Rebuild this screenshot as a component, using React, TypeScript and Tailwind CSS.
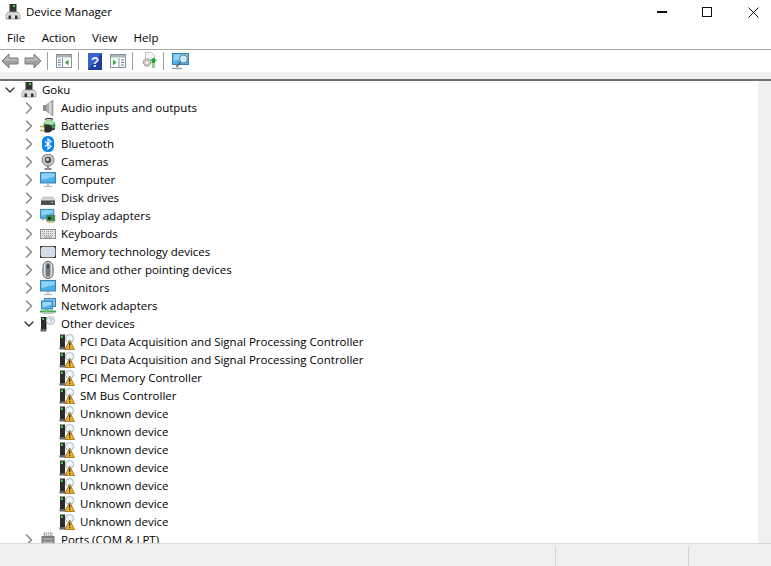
import React from 'react';
import { ChevronDown, ChevronRight } from 'lucide-react';

const PcIcon = () => (
  <svg width="18" height="18" viewBox="0 0 18 18">
    <rect x="5.500" y="1" width="7" height="8" fill="#333" />
    <rect x="9" y="2" width="2" height="2" fill="#3fd34a" />
    <path d="M4 9h10l2 2.500V16H2v-4.500z" fill="#dcdcdc" stroke="#9a9a9a" strokeWidth="0.8" />
    <rect x="4.500" y="12.500" width="2.500" height="3.500" fill="#333" />
    <rect x="11" y="12.500" width="2.500" height="3.500" fill="#333" />
  </svg>
);

const AudioIcon = () => (
  <svg width="16" height="16" viewBox="0 0 16 16">
    <rect x="3" y="5" width="4" height="6" fill="#8f8f8f" />
    <path d="M6 5l7-5v16l-7-5z" fill="#b0b0b0" stroke="#8c8c8c" strokeWidth="0.6" />
    <rect x="9" y="2.500" width="2.500" height="11" fill="#d6d6d6" />
  </svg>
);

const BatteryIcon = () => (
  <svg width="16" height="16" viewBox="0 0 16 16">
    <path d="M5 1.500c2-1.500 6-1.500 8 0" fill="none" stroke="#333" strokeWidth="1.200" />
    <ellipse cx="9.500" cy="7.500" rx="6" ry="6" fill="#3f9c4a" />
    <ellipse cx="9.500" cy="4.500" rx="5" ry="2.500" fill="#a6dfa8" />
    <path d="M0 8.500h5M0 12.500h5" stroke="#c9a13a" strokeWidth="1.400" />
    <path d="M4.500 6.500h3.500a4 4 0 0 1 0 8H4.500z" fill="#2d2d2d" />
    <path d="M11 11h4" stroke="#333" strokeWidth="1.500" />
  </svg>
);

const BluetoothIcon = () => (
  <svg width="16" height="16" viewBox="0 0 16 16">
    <rect x="2" y="0" width="12" height="16" rx="5.500" fill="#0a84f0" />
    <path d="M5 5.500l6 5-3 2.500V3l3 2.500-6 5" fill="none" stroke="#fff" strokeWidth="1.200" />
  </svg>
);

const CameraIcon = () => (
  <svg width="16" height="16" viewBox="0 0 16 16">
    <circle cx="8" cy="6" r="6" fill="#c9c9c9" stroke="#777" />
    <circle cx="8" cy="6" r="3.200" fill="#555" />
    <circle cx="7.500" cy="5.500" r="1.400" fill="#b9d4ea" />
    <path d="M8 12v2M4.500 15h7" stroke="#666" strokeWidth="1.500" />
  </svg>
);

const MonitorIcon = () => (
  <svg width="16" height="16" viewBox="0 0 16 16">
    <rect x="0.500" y="0.500" width="15" height="10.500" fill="#4db2ec" stroke="#3f7fae" />
    <path d="M1.500 1.500h13v3l-13 3.500z" fill="#8fd4f6" />
    <path d="M8 11v2.500" stroke="#a9b4bd" strokeWidth="2" />
    <path d="M4 14.500h8" stroke="#b4bcc3" strokeWidth="1.200" />
  </svg>
);

const DiskIcon = () => (
  <svg width="16" height="16" viewBox="0 0 16 16">
    <path d="M3 7h10l2 3.500H1z" fill="#d5d5d5" stroke="#aaa" strokeWidth="0.500" />
    <rect x="1" y="10.500" width="14" height="4.500" fill="#4e4e4e" />
    <rect x="11" y="12" width="2" height="1" fill="#5fe05f" />
  </svg>
);

const DisplayIcon = () => (
  <svg width="18" height="16" viewBox="0 0 18 16">
    <rect x="0.500" y="0.500" width="15" height="10" fill="#4db2ec" stroke="#3f7fae" />
    <path d="M1.500 1.500h13v3l-13 3z" fill="#8fd4f6" />
    <path d="M2 12h3" stroke="#9aa4ac" strokeWidth="1.500" />
    <rect x="7" y="7" width="10" height="7" fill="#3d8a4a" />
    <rect x="9" y="9" width="3" height="3" fill="#222" />
    <path d="M8 15h8" stroke="#c9a13a" />
  </svg>
);

const KeyboardIcon = () => (
  <svg width="16" height="16" viewBox="0 0 16 16">
    <rect x="0.500" y="3.500" width="15" height="9" fill="#e4e4e4" stroke="#8d8d8d" />
    <path d="M2 5.500h12M2 7.500h12M2 9.500h12" stroke="#9a9a9a" strokeDasharray="1 1" />
    <path d="M4 11h8" stroke="#9a9a9a" />
  </svg>
);

const MemoryIcon = () => (
  <svg width="16" height="16" viewBox="0 0 16 16">
    <rect x="0.500" y="2.500" width="15" height="11" rx="1.500" fill="#d4dde6" stroke="#6a6a6a" />
    <path d="M0.500 4.500v-2h2M13.500 2.500h2v2M15.500 11.500v2h-2M2.500 13.500h-2v-2" fill="none" stroke="#222" />
  </svg>
);

const MouseIcon = () => (
  <svg width="14" height="18" viewBox="0 0 14 18">
    <rect x="2" y="0.500" width="10" height="17" rx="5" fill="#e2e2e2" stroke="#555" />
    <rect x="4.500" y="2" width="5" height="14" rx="2.500" fill="#6f7a88" />
    <rect x="6.200" y="3.500" width="1.600" height="4" fill="#30363d" />
  </svg>
);

const NetworkIcon = () => (
  <svg width="16" height="16" viewBox="0 0 16 16">
    <rect x="4.500" y="0.500" width="11" height="8" fill="#7fcaf2" stroke="#3f7fae" />
    <rect x="1.500" y="3" width="11" height="8" fill="#4db2ec" stroke="#3f7fae" />
    <path d="M2.500 4h9v2.500l-9 3z" fill="#9bd9f7" />
    <path d="M0 13.500h16" stroke="#3fa34d" strokeWidth="2" />
    <path d="M7 11v3" stroke="#6fbf73" strokeWidth="3" />
    <path d="M2 15.500h12" stroke="#bfc5ca" />
  </svg>
);

const OtherIcon = () => (
  <svg width="16" height="16" viewBox="0 0 16 16">
    <rect x="1" y="1" width="5.500" height="12" fill="#2b2b2b" />
    <rect x="2" y="2" width="2" height="2" fill="#3fd34a" />
    <path d="M0.500 13h6v2.500h-6z" fill="#666" />
    <circle cx="10.500" cy="4.500" r="4" fill="#f4f8fb" stroke="#9cb3c6" />
    <text x="10.500" y="7" textAnchor="middle" fontSize="6.500" fill="#3f7fae" fontFamily="Liberation Sans, sans-serif">?</text>
  </svg>
);

const WarningIcon = () => (
  <svg width="18" height="18" viewBox="0 0 18 18">
    <rect x="2" y="1.500" width="5" height="12.500" fill="#2b2b2b" />
    <rect x="2.800" y="2.500" width="2" height="2.500" fill="#3fd34a" />
    <path d="M1.500 14h6v2.500h-6z" fill="#666" />
    <circle cx="11.500" cy="5.500" r="4" fill="#f4f8fb" stroke="#9cb3c6" />
    <path d="M11.700 7L16.500 16.500H7z" fill="#f5b324" stroke="#7b5a10" strokeWidth="0.700" />
    <path d="M11.700 9.500v3.800M11.700 14v1.200" stroke="#222" strokeWidth="1.200" />
  </svg>
);

const PortIcon = () => (
  <svg width="16" height="16" viewBox="0 0 16 16">
    <path d="M4 1h8v3H4z" fill="#e4e4e4" stroke="#666" strokeDasharray="1 1" />
    <rect x="1.500" y="4" width="13" height="11" fill="#7b7b7b" />
    <path d="M3 7h10M3 10h10M3 13h10" stroke="#d0d0d0" />
  </svg>
);

const BackIcon = ({ flip }: { flip?: boolean }) => (
  <svg width="18" height="16" viewBox="0 0 18 16" className={flip ? '-scale-x-100' : ''}>
    <path d="M1 8l7-7v4h9v6H8v4z" fill="#a0a0a0" stroke="#7c7c7c" />
    <path d="M3 7.500L7.500 3v3h9v1.500z" fill="#bdbdbd" />
  </svg>
);

const PaneIcon = ({ right }: { right?: boolean }) => (
  <svg width="16" height="14" viewBox="0 0 16 14">
    <rect x="0.500" y="0.500" width="15" height="13" fill="#fff" stroke="#8a949c" />
    <rect x="1" y="1" width="14" height="2.500" fill="#a9b4bd" />
    {right ? (
      <>
        <path d="M3 5.500l3.500 3-3.500 3z" fill="#2fae3c" />
        <path d="M9 4v9" stroke="#8a949c" />
        <path d="M11 6h3M11 8.500h3M11 11h3" stroke="#4d7ea8" />
      </>
    ) : (
      <>
        <path d="M2 6h3M2 8.500h3M2 11h3" stroke="#4d7ea8" />
        <path d="M6.500 4v9" stroke="#8a949c" />
        <path d="M12.500 5.500L9 8.500l3.500 3z" fill="#2fae3c" />
      </>
    )}
  </svg>
);

const HelpIcon = () => (
  <svg width="14" height="17" viewBox="0 0 14 17">
    <rect width="14" height="17" fill="#1f3f9e" />
    <path d="M0 0h14L0 17z" fill="#3a62c8" />
    <text x="7" y="13.500" textAnchor="middle" fontSize="14" fontWeight="700" fill="#e8ecf8" fontFamily="Liberation Sans, sans-serif">?</text>
  </svg>
);

const UpdateIcon = () => (
  <svg width="18" height="18" viewBox="0 0 18 18">
    <path d="M4.500 0.500h6l3 3v7h-9z" fill="#f6f6f6" stroke="#c4c4c4" />
    <circle cx="6" cy="10.500" r="3.800" fill="#c4c4c4" stroke="#8a8a8a" strokeDasharray="1.500 1" />
    <circle cx="6" cy="10.500" r="1.500" fill="#f4f4f4" />
    <path d="M9 9l3.500-3.500L16 9h-2v2.500h-3V9z" fill="#1fa82f" />
    <path d="M11 13h3M11 15h3" stroke="#1fa82f" />
  </svg>
);

const ScanIcon = () => (
  <svg width="18" height="17" viewBox="0 0 18 17">
    <rect x="0.500" y="0.500" width="16" height="11" fill="#4db2ec" stroke="#3f7fae" />
    <path d="M1.500 1.500h14v3l-14 3.500z" fill="#8fd4f6" />
    <path d="M0 15.500h10" stroke="#9aa4ac" strokeWidth="1.500" />
    <circle cx="11.500" cy="6" r="4" fill="#cfeafa" stroke="#6d7f8c" />
    <path d="M8.500 9l-4 5" stroke="#5f5f5f" strokeWidth="1.500" />
  </svg>
);

const categories: [string, React.ReactNode][] = [
  ['Audio inputs and outputs', <AudioIcon />],
  ['Batteries', <BatteryIcon />],
  ['Bluetooth', <BluetoothIcon />],
  ['Cameras', <CameraIcon />],
  ['Computer', <MonitorIcon />],
  ['Disk drives', <DiskIcon />],
  ['Display adapters', <DisplayIcon />],
  ['Keyboards', <KeyboardIcon />],
  ['Memory technology devices', <MemoryIcon />],
  ['Mice and other pointing devices', <MouseIcon />],
  ['Monitors', <MonitorIcon />],
  ['Network adapters', <NetworkIcon />],
];

const otherDevices = [
  'PCI Data Acquisition and Signal Processing Controller',
  'PCI Data Acquisition and Signal Processing Controller',
  'PCI Memory Controller',
  'SM Bus Controller',
  'Unknown device',
  'Unknown device',
  'Unknown device',
  'Unknown device',
  'Unknown device',
  'Unknown device',
  'Unknown device',
];

const Category = ({ label, icon, open }: { label: string; icon: React.ReactNode; open?: boolean }) => (
  <div className="flex h-[18px] items-center">
    <div className="flex w-[39px] justify-end">
      {open ? (
        <ChevronDown className="mr-[2px] h-4 w-4 text-[#333]" strokeWidth={2} />
      ) : (
        <ChevronRight className="h-5 w-5 text-[#8a8a8a]" strokeWidth={1.8} />
      )}
    </div>
    <div className="ml-px flex w-[16px] justify-center">{icon}</div>
    <span className="ml-[5px] whitespace-nowrap">{label}</span>
  </div>
);

const Sep = ({ className }: { className: string }) => <div className={`h-[18px] w-px bg-[#a0a0a0] ${className}`} />;

export default function App() {
  return (
    <div className="flex h-[566px] w-[771px] flex-col overflow-hidden bg-white font-['Open_Sans','Liberation_Sans',sans-serif] text-[11.5px] text-black">
      <div className="flex h-[26px] shrink-0 items-center pb-[2px] pl-[4px]">
        <PcIcon />
        <span className="ml-[4px] leading-none">Device Manager</span>
        <div className="ml-auto flex items-center">
          <div className="mr-[35px] h-[1.500px] w-[10px] bg-[#111]" />
          <div className="mr-[36px] h-[10px] w-[10px] border border-[#111]" />
          <svg width="11" height="11" viewBox="0 0 11 11" className="mr-[12px]">
            <path d="M0.500 0.500l10 10M10.500 0.500l-10 10" stroke="#111" strokeWidth="1" />
          </svg>
        </div>
      </div>

      <div className="flex h-[24px] shrink-0 items-center gap-[16.5px] border-b border-[#a8a8a8] pl-[7px]">
        <span>File</span>
        <span>Action</span>
        <span>View</span>
        <span>Help</span>
      </div>

      <div className="flex h-[22px] shrink-0 items-center pl-[1px]">
        <BackIcon />
        <div className="ml-[5px]">
          <BackIcon flip />
        </div>
        <Sep className="ml-[5px]" />
        <div className="ml-[8px]">
          <PaneIcon />
        </div>
        <Sep className="ml-[6px]" />
        <div className="ml-[9px]">
          <HelpIcon />
        </div>
        <div className="ml-[8px]">
          <PaneIcon right />
        </div>
        <Sep className="ml-[6px]" />
        <div className="ml-[8px]">
          <UpdateIcon />
        </div>
        <Sep className="ml-[4px]" />
        <div className="ml-[8px]">
          <ScanIcon />
        </div>
      </div>

      <div className="h-[9px] shrink-0 border-b-2 border-[#6e6e6e] bg-[#f0f0f0]" />

      <div className="flex min-h-0 flex-1 border-b border-[#d9d9d9]">
        <div className="min-w-0 flex-1 overflow-hidden">
          <div className="flex h-[18px] items-center">
            <div className="flex w-[20px] justify-center">
              <ChevronDown className="h-4 w-4 text-[#333]" strokeWidth={2} />
            </div>
            <PcIcon />
            <span className="ml-[4px]">Goku</span>
          </div>
          {categories.map(([label, icon]) => (
            <Category key={label} label={label} icon={icon} />
          ))}
          <Category label="Other devices" icon={<OtherIcon />} open />
          {otherDevices.map((name, i) => (
            <div key={i} className="flex h-[18px] items-center pl-[58px]">
              <WarningIcon />
              <span className="ml-[4px] whitespace-nowrap">{name}</span>
            </div>
          ))}
          <Category label="Ports (COM & LPT)" icon={<PortIcon />} />
        </div>
        <div className="w-[13px] shrink-0 bg-[#f0f0f0]" />
      </div>

      <div className="flex h-[22px] shrink-0 bg-[#f0f0f0] pt-[2px]">
        <div className="w-[556px] border-r border-[#d4d4d4]" />
        <div className="w-[133px] border-r border-[#d4d4d4]" />
      </div>
    </div>
  );
}
